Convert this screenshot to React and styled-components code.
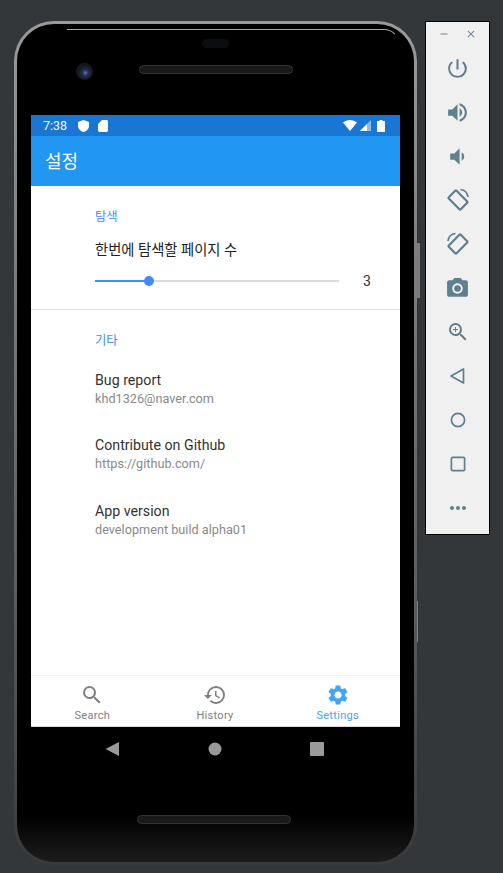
import React from 'react'
import styled, { createGlobalStyle } from 'styled-components'
import { MdSearch, MdHistory, MdSettings, MdPowerSettingsNew, MdVolumeUp, MdVolumeDown, MdCameraAlt, MdZoomIn, MdMoreHoriz, MdClose, MdRemove } from 'react-icons/md'

const GlobalStyle = createGlobalStyle`
html, body {
  margin: 0;
  padding: 0;
  background: #33373a;
}
* { box-sizing: border-box; }
`

const Page = styled.div`
width: 503px;
height: 873px;
padding: 21px 0 0 14px;
display: flex;
align-items: flex-start;
overflow: hidden;
font-family: Roboto, "Noto Sans CJK KR", sans-serif;
`

const Phone = styled.div`
position: relative;
width: 403px;
height: 844px;
padding: 0 14px;
border-radius: 40px;
border: 3px solid transparent;
background:
  linear-gradient(#000 0, #000 790px, #1c1c1c 100%) padding-box,
  linear-gradient(#9a9a9a 0, #7c7c7c 30%, #5a5a5a 70%, #3a3a3a 100%) border-box;
flex-shrink: 0;
`

const SideKey = styled.span`
position: absolute;
left: 400px;
top: ${p => p.$top}px;
width: ${p => p.$w}px;
height: ${p => p.$h}px;
background: #7c7c7c;
`

const Shine = styled.span`
position: absolute;
top: 5px;
left: 50px;
right: 14px;
height: 16px;
border-top: 1px solid #a8a8a8;
border-right: 1px solid transparent;
border-top-right-radius: 26px;
`

const Pill = styled.span`
position: absolute;
left: 185px;
top: 15px;
width: 27px;
height: 9px;
border-radius: 5px;
background: #0b0d10;
`

const Speaker = styled.span`
position: absolute;
left: ${p => p.$left}px;
top: ${p => p.$top}px;
width: 154px;
height: 9px;
border-radius: 5px;
background: #1a1a1a;
border: 1px solid #333;
`

const Camera = styled.span`
position: absolute;
left: 59px;
top: 39px;
width: 17px;
height: 17px;
border-radius: 50%;
background: radial-gradient(circle at 55% 58%, #5a74c0 0, #24304f 22%, #14161c 55%, #1c1e22 100%);
`

const Screen = styled.div`
margin-top: 91px;
width: 369px;
height: 612px;
display: flex;
flex-direction: column;
background: #fff;
border-bottom: 1px solid #d8d8d8;
`

const StatusBar = styled.div`
height: 21px;
padding: 0 15px 0 12px;
display: flex;
align-items: center;
background: #1976d2;
color: #f2f6fb;
font-size: 12.5px;
flex-shrink: 0;
`

const StatusTime = styled.span`
margin-right: 2px;
`

const StatusLeft = styled.div`
display: flex;
align-items: center;
gap: 9px;
flex: 1;
`

const StatusRight = styled.div`
display: flex;
align-items: center;
gap: 3px;
`

const AppBar = styled.div`
height: 50px;
padding: 0 14px 2px;
display: flex;
align-items: center;
background: #2196f3;
color: #fff;
font-size: 18px;
flex-shrink: 0;
`

const Content = styled.div`
flex: 1;
`

const Section = styled.section`
padding: 0 29px 0 64px;
border-bottom: ${p => (p.$divider ? '1px solid #e0e0e0' : 'none')};
height: ${p => (p.$divider ? '124px' : 'auto')};
`

const SectionTitle = styled.h3`
margin: 0;
padding-top: 23px;
font-size: 12.3px;
line-height: 16px;
font-weight: 400;
color: #448aff;
`

const PrefTitle = styled.div`
margin-top: 16px;
font-size: 14.3px;
line-height: 18px;
color: #212121;
`

const SliderRow = styled.div`
margin-top: 12px;
display: flex;
align-items: center;
height: 20px;
`

const Track = styled.div`
position: relative;
width: 244px;
height: 2px;
background: #dcdcdc;
`

const TrackFill = styled.div`
height: 2px;
background: #448aff;
`

const Thumb = styled.span`
position: absolute;
top: -4px;
width: 10px;
height: 10px;
margin-left: -5px;
border-radius: 50%;
background: #448aff;
`

const SliderValue = styled.span`
margin-left: 24px;
font-size: 14px;
color: #333;
`

const ItemList = styled.div`
padding-top: 22px;
`

const Item = styled.div`
height: 65.33px;
`

const ItemTitle = styled.div`
font-size: 14.2px;
line-height: 19px;
color: #333;
`

const ItemSub = styled.div`
font-size: 12.7px;
line-height: 17px;
color: #8a8a8a;
`

const BottomNav = styled.nav`
height: 51px;
padding-right: 1px;
display: flex;
border-top: 1px solid #f2f2f2;
flex-shrink: 0;
`

const Tab = styled.div`
flex: 1;
display: flex;
flex-direction: column;
align-items: center;
padding-top: 7px;
color: ${p => (p.$active ? '#42a5f5' : '#808080')};
font-size: 11px;
letter-spacing: 0.3px;
line-height: 14px;
svg { display: block; margin-bottom: 2px; }
`

const SoftKeys = styled.div`
height: 42px;
padding: 2px 1px 0 0;
display: grid;
grid-template-columns: 102px 102px 102px;
justify-content: center;
align-items: center;
justify-items: center;
`

const Panel = styled.aside`
margin-left: 8px;
width: 65px;
height: 514px;
background: #f0f0f0;
border: 1px solid #000;
display: flex;
flex-direction: column;
align-items: center;
color: #5f7f8d;
flex-shrink: 0;
`

const PanelHeader = styled.div`
width: 100%;
height: 24px;
padding: 0 12px;
display: flex;
justify-content: space-between;
align-items: center;
color: #6f8a96;
`

const PanelButton = styled.div`
height: 44px;
width: 100%;
display: flex;
align-items: center;
justify-content: center;
`

const Shield = () => (
  <svg width="11" height="12" viewBox="0 0 11 12"><path d="M5.5 0 L11 2 V6 C11 9 8.5 11.3 5.5 12 C2.5 11.3 0 9 0 6 V2 Z" fill="#fff" /></svg>
)
const SdCard = () => (
  <svg width="10" height="12" viewBox="0 0 10 12"><path d="M4 0 H8.6 C9.4 0 10 .6 10 1.4 V10.6 C10 11.4 9.4 12 8.6 12 H1.4 C.6 12 0 11.4 0 10.6 V4 Z" fill="#fff" /></svg>
)
const Wifi = () => (
  <svg width="14" height="11" viewBox="0 0 14 11"><path d="M0 2.6 C4 -.8 10 -.8 14 2.6 L7 11 Z" fill="#fff" /></svg>
)
const Signal = () => (
  <svg width="11" height="11" viewBox="0 0 11 11"><path d="M11 0 V11 H0 Z" fill="#8dbbea" /><path d="M7 4 V11 H0 Z" fill="#fff" /></svg>
)
const Battery = () => (
  <svg width="8" height="12" viewBox="0 0 8 12" style={{ marginLeft: 3 }}><path d="M2.5 0 H5.5 V1 H8 V12 H0 V1 H2.5 Z" fill="#fff" /></svg>
)

const RotateIcon = ({ flip }) => (
  <svg width="24" height="24" viewBox="0 0 24 24" fill="none" stroke="currentColor" style={{ transform: flip ? 'scaleX(-1)' : 'none' }}>
    <rect x="6.5" y="3.5" width="11" height="17" rx="1" strokeWidth="2.2" transform="rotate(-45 12 12)" />
    <path d="M14.5 1.5 C18.5 2 21.5 5 22 9" strokeWidth="1.6" />
  </svg>
)

const BackOutline = () => (
  <svg width="18" height="18" viewBox="0 0 18 18" fill="none" stroke="currentColor" strokeWidth="1.7" strokeLinejoin="round"><path d="M14.5 2 V16 L2 9 Z" /></svg>
)
const CircleOutline = () => (
  <svg width="18" height="18" viewBox="0 0 18 18" fill="none" stroke="currentColor" strokeWidth="1.7"><circle cx="9" cy="9" r="6.6" /></svg>
)
const SquareOutline = () => (
  <svg width="18" height="18" viewBox="0 0 18 18" fill="none" stroke="currentColor" strokeWidth="1.7"><rect x="2.4" y="2.4" width="13.2" height="13.2" rx="1.2" /></svg>
)

const panelIcons = [
  <MdPowerSettingsNew size={25} />,
  <MdVolumeUp size={25} />,
  <MdVolumeDown size={25} />,
  <RotateIcon />,
  <RotateIcon flip />,
  <MdCameraAlt size={25} />,
  <MdZoomIn size={24} />,
  <BackOutline />,
  <CircleOutline />,
  <SquareOutline />,
  <MdMoreHoriz size={24} />,
]

const items = [
  ['Bug report', 'khd1326@naver.com'],
  ['Contribute on Github', 'https://github.com/'],
  ['App version', 'development build alpha01'],
]

const App = () => {
  const sliderPos = 54

  return (
    <Page>
      <GlobalStyle />
      <Phone>
        <SideKey $top={219} $w={3} $h={55} />
        <SideKey $top={577} $w={1} $h={41} />
        <Shine />
        <Pill />
        <Camera />
        <Speaker $left={122} $top={41} />
        <Speaker $left={120} $top={791} />
        <Screen>
          <StatusBar>
            <StatusLeft>
              <StatusTime>7:38</StatusTime>
              <Shield />
              <SdCard />
            </StatusLeft>
            <StatusRight>
              <Wifi />
              <Signal />
              <Battery />
            </StatusRight>
          </StatusBar>
          <AppBar>설정</AppBar>
          <Content>
            <Section $divider>
              <SectionTitle>탐색</SectionTitle>
              <PrefTitle>한번에 탐색할 페이지 수</PrefTitle>
              <SliderRow>
                <Track>
                  <TrackFill style={{ width: sliderPos }} />
                  <Thumb style={{ left: sliderPos }} />
                </Track>
                <SliderValue>3</SliderValue>
              </SliderRow>
            </Section>
            <Section>
              <SectionTitle>기타</SectionTitle>
              <ItemList>
                {items.map(([title, sub]) => (
                  <Item key={title}>
                    <ItemTitle>{title}</ItemTitle>
                    <ItemSub>{sub}</ItemSub>
                  </Item>
                ))}
              </ItemList>
            </Section>
          </Content>
          <BottomNav>
            <Tab><MdSearch size={24} />Search</Tab>
            <Tab><MdHistory size={24} />History</Tab>
            <Tab $active><MdSettings size={24} />Settings</Tab>
          </BottomNav>
        </Screen>
        <SoftKeys>
          <svg width="16" height="16" viewBox="0 0 16 16"><path d="M14 1 V15 L.5 8 Z" fill="#9a9a9a" /></svg>
          <svg width="14" height="14" viewBox="0 0 14 14"><circle cx="7" cy="7" r="6.5" fill="#9a9a9a" /></svg>
          <svg width="14" height="14" viewBox="0 0 14 14"><rect width="14" height="14" rx="1" fill="#9a9a9a" /></svg>
        </SoftKeys>
      </Phone>
      <Panel>
        <PanelHeader>
          <MdRemove size={12} />
          <MdClose size={12} />
        </PanelHeader>
        {panelIcons.map((icon, i) => (
          <PanelButton key={i}>{icon}</PanelButton>
        ))}
      </Panel>
    </Page>
  )
}

export default App
